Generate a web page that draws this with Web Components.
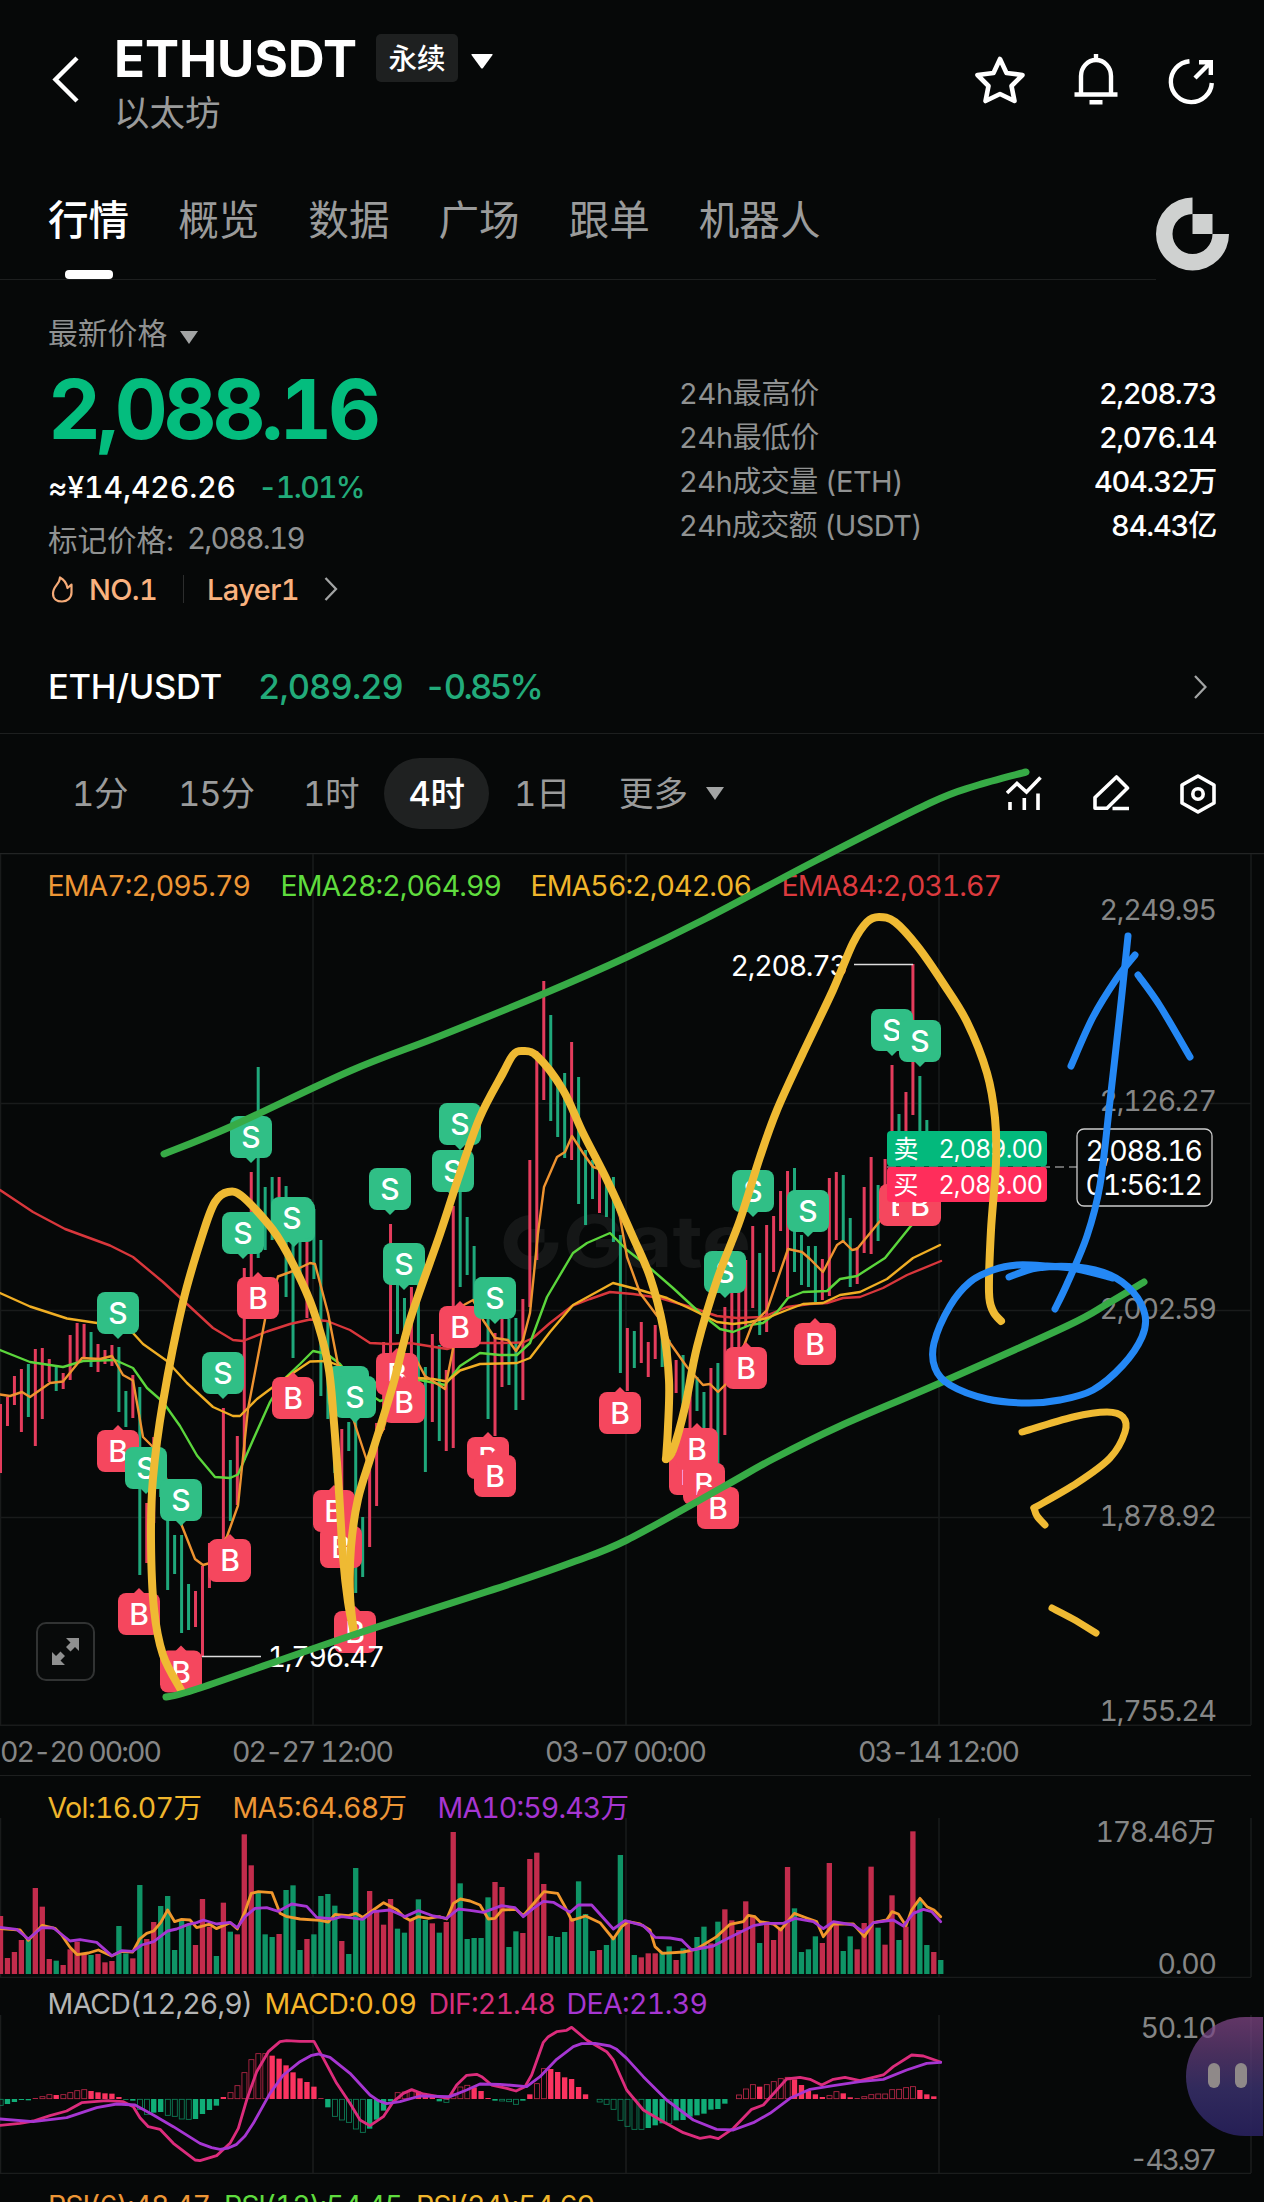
<!DOCTYPE html>
<html lang="zh-CN">
<head>
<meta charset="utf-8">
<title>ETHUSDT</title>
<style>
  html, body { margin: 0; background: #060808; }
  body {
    position: relative;
    width: 1264px;
    height: 2202px;
    overflow: hidden;
    font-family: Inter, "Noto Sans CJK SC", sans-serif;
    font-feature-settings: "tnum";
    color: #fff;
  }
</style>
</head>
<body>
<app-header symbol="ETHUSDT" name="以太坊">永续</app-header>
<tab-bar>
  <tab-item active>行情</tab-item>
  <tab-item>概览</tab-item>
  <tab-item>数据</tab-item>
  <tab-item>广场</tab-item>
  <tab-item>跟单</tab-item>
  <tab-item>机器人</tab-item>
</tab-bar>
<price-summary>
  <stat-row label="24h最高价" lw="140" value="2,208.73" vw="117"></stat-row>
  <stat-row label="24h最低价" lw="140" value="2,076.14" vw="117"></stat-row>
  <stat-row label="24h成交量 (ETH)" lw="224" value="404.32万" vw="122"></stat-row>
  <stat-row label="24h成交额 (USDT)" lw="243" value="84.43亿" vw="105"></stat-row>
</price-summary>
<pair-bar></pair-bar>
<interval-bar></interval-bar>
<kline-chart></kline-chart>
<volume-chart></volume-chart>
<macd-chart></macd-chart>
<rsi-legend></rsi-legend>
<drawing-layer></drawing-layer>
<assist-bubble></assist-bubble>

<script>
// Text that is tracked in or out until it takes the width in "w"
class FitText extends HTMLElement {
  constructor() {
    super();
    this.attachShadow({ mode: "open" });
    this.shadowRoot.innerHTML = `
      <style>
        :host { display: inline-block; white-space: nowrap; }
      </style>
      <span><slot></slot></span>`;
  }

  connectedCallback() {
    const w = parseFloat(this.getAttribute("w"));
    const n = this.textContent.length;
    if (!w || !n) return;
    const now = this.shadowRoot.querySelector("span").getBoundingClientRect().width;
    this.style.letterSpacing = (w - now) / n + "px";
  }
}
customElements.define("fit-text", FitText);

class AppHeader extends HTMLElement {
  constructor() {
    super();
    this.attachShadow({ mode: "open" });
  }

  connectedCallback() {
    this.shadowRoot.innerHTML = `
      <style>
        :host { display: flex; height: 170px; box-sizing: border-box; padding: 31px 48px 0 48px; }
        .back { margin: 22px 32px 0 0; }
        .names { flex: 1; }
        .line { display: flex; align-items: center; height: 54px; }
        .symbol { font-size: 51px; font-weight: 650; line-height: 54px; padding-top: 2px; }
        .badge { margin-left: 19px; width: 82px; height: 48px; line-height: 49px; border-radius: 5px;
          background: #1e2020; font-size: 28.5px; font-weight: 500; text-align: center; }
        .caret { margin: 6px 0 0 13px; }
        .name { line-height: 58px; font-size: 35.500px; color: #9a9b9b; }
        .icons { display: flex; gap: 47px; margin-top: 21px; }
      </style>
      <svg class="back" width="34" height="54" viewBox="48 53 34 54" fill="none" stroke="#fff" stroke-width="4.4"><path d="M77 58 55.500 79.5 77 101"/></svg>
      <div class="names">
        <div class="line">
          <fit-text class="symbol" w="243">${this.getAttribute("symbol")}</fit-text>
          <span class="badge"><slot></slot></span>
          <svg class="caret" width="22" height="15"><path d="M1 0H21Q22 0 21.500 1L12 14Q11 15 10 14L.5 1Q0 0 1 0Z" fill="#fff"/></svg>
        </div>
        <div class="name">${this.getAttribute("name")}</div>
      </div>
      <div class="icons">
        <svg width="52" height="54" viewBox="974 52 52 54" fill="none" stroke="#fff" stroke-width="4.600" stroke-linejoin="round"><path d="M1000 59 1006.500 73 1022.500 75 1011.500 86 1014.500 101 1000 94 985.500 101 988.500 86 977.500 75 993.500 73Z"/></svg>
        <svg width="46" height="54" viewBox="1073 52 46 54" fill="none" stroke="#fff" stroke-width="4.400"><path d="M1081 94V76a15 16 0 0 1 30 0V94M1074.500 94.500H1117.500M1096 54V61M1089.500 102.300H1102.500"/></svg>
        <svg width="50" height="54" viewBox="1166 52 50 54" fill="none" stroke="#fff" stroke-width="4.400"><path d="M1189.500 61.200A20.500 20.500 0 1 0 1211.800 83M1195 78 1210 63M1199 62.300H1210.800V75"/></svg>
      </div>`;
  }
}
customElements.define("app-header", AppHeader);

class TabItem extends HTMLElement {
  constructor() {
    super();
    this.attachShadow({ mode: "open" });
    this.shadowRoot.innerHTML = `
      <style>
        :host { display: flex; flex-direction: column; align-items: center; font-size: 40.600px; line-height: 98px; padding-top: 2px; color: #9a9b9b; }
        :host([active]) { color: #fff; font-weight: 500; }
        i { width: 48px; height: 9px; border-radius: 4px; }
        :host([active]) i { background: #fff; }
      </style>
      <span><slot></slot></span><i></i>`;
  }
}
customElements.define("tab-item", TabItem);

class TabBar extends HTMLElement {
  constructor() {
    super();
    this.attachShadow({ mode: "open" });
    this.shadowRoot.innerHTML = `
      <style>
        :host { display: flex; height: 110px; }
        nav { display: flex; gap: 49px; box-sizing: border-box; width: 1156px; padding-left: 48px; border-bottom: 1px solid #1d1f1f; }
        svg { margin-top: 27px; }
      </style>
      <nav><slot></slot></nav>
      <svg width="74" height="74" viewBox="0 0 74 74" fill="#cfd1d0">
        <path d="M36.500 .5A36.500 36.500 0 1 0 73 37H56.500A20 20 0 1 1 36.500 17ZM36.500 17H56.500V37H36.500Z"/>
      </svg>`;
  }
}
customElements.define("tab-bar", TabBar);

class StatRow extends HTMLElement {
  constructor() {
    super();
    this.attachShadow({ mode: "open" });
  }

  connectedCallback() {
    const a = (n) => this.getAttribute(n);
    this.shadowRoot.innerHTML = `
      <style>
        :host { display: flex; justify-content: space-between; font-size: 29px; line-height: 44px; }
        .label { color: #909292; }
        .value { font-weight: 500; }
      </style>
      <fit-text class="label" w="${a("lw")}">${a("label")}</fit-text>
      <fit-text class="value" w="${a("vw")}">${a("value")}</fit-text>`;
  }
}
customElements.define("stat-row", StatRow);

class PriceSummary extends HTMLElement {
  constructor() {
    super();
    this.attachShadow({ mode: "open" });
    this.shadowRoot.innerHTML = `
      <style>
        :host { display: flex; justify-content: space-between; height: 360px; box-sizing: border-box; padding: 31px 48px 0 48px; }
        .row { display: flex; align-items: center; white-space: nowrap; }
        .type { height: 40px; font-size: 29.800px; color: #909292; gap: 13px; }
        .type svg { margin-top: 12px; }
        .last { height: 117px; font-size: 82px; font-weight: 650; color: #04bd7e; }
        .fiat { height: 38px; font-size: 30px; font-weight: 500; gap: 22px; }
        .fiat .chg { color: #22ab7a; }
        .mark { height: 64px; font-size: 29.500px; color: #909292; gap: 13px; }
        .tags { height: 38px; font-size: 29px; font-weight: 500; color: #f9b27f; }
        .tags i { width: 1px; height: 28px; background: #2c2d2d; margin: 0 23px 0 26px; }
        .stats { width: 537px; padding-top: 61px; }
      </style>
      <div>
        <div class="row type">最新价格<svg width="18" height="13"><path d="M0 0H18L9 13Z" fill="#a2a4a4"/></svg></div>
        <div class="row last"><fit-text w="329">2,088.16</fit-text></div>
        <div class="row fiat"><fit-text w="188">≈¥14,426.26</fit-text><fit-text class="chg" w="106">-1.01%</fit-text></div>
        <div class="row mark"><span>标记价格:</span><fit-text w="117">2,088.19</fit-text></div>
        <div class="row tags">
          <svg width="41" height="28" viewBox="49 575 41 28" fill="none" stroke="#f5ab78" stroke-width="2.200" stroke-linejoin="round"><path d="M61 577.500C61 584 54 586 54 593.500C54 599 58 601.500 63 601.500S72.500 598 72.500 592.500V584.500L68.500 588C67.500 583 65 579.500 61 577.500Z"/></svg>
          <fit-text w="68">NO.1</fit-text><i></i><fit-text w="92">Layer1</fit-text>
          <svg width="40" height="26" viewBox="299 576 40 26" fill="none" stroke="#a2a4a4" stroke-width="2.300"><path d="M325.500 578 336 589 325.500 600"/></svg>
        </div>
      </div>
      <div class="stats"><slot></slot></div>`;
  }
}
customElements.define("price-summary", PriceSummary);

class PairBar extends HTMLElement {
  constructor() {
    super();
    this.attachShadow({ mode: "open" });
    this.shadowRoot.innerHTML = `
      <style>
        :host { display: flex; align-items: center; height: 94px; box-sizing: border-box; padding: 0 57px 0 48px;
          font-size: 34.500px; font-weight: 500; border-bottom: 1px solid #1d1f1f; }
        .price { margin-left: 36px; color: #22ab7a; }
        .chg { margin-left: 21px; color: #22ab7a; }
        svg { margin-left: auto; }
      </style>
      <fit-text w="174">ETH/USDT</fit-text>
      <fit-text class="price" w="145">2,089.29</fit-text>
      <fit-text class="chg" w="117">-0.85%</fit-text>
      <svg width="14" height="24" fill="none" stroke="#a2a4a4" stroke-width="2.300"><path d="M2 1 12.500 12 2 23"/></svg>`;
  }
}
customElements.define("pair-bar", PairBar);

class IntervalBar extends HTMLElement {
  constructor() {
    super();
    this.attachShadow({ mode: "open" });
    this.shadowRoot.innerHTML = `
      <style>
        :host { display: flex; align-items: center; height: 119px; padding: 0 47px 0 72px;
          font-size: 34.500px; line-height: 70px; color: #9a9b9b; }
        .on { box-sizing: border-box; width: 105px; height: 71px; margin: 0 25px 0 25px; border-radius: 36px;
          background: #1f2121; color: #fff; font-weight: 500; text-align: center; }
        .caret { margin: 0 auto 0 18px; }
        .tool + .tool { margin-left: 49px; }
        fit-text { padding-top: 1px; }
      </style>
      <fit-text w="56">1分</fit-text>
      <fit-text w="76" style="margin-left:50px">15分</fit-text>
      <fit-text w="56" style="margin-left:49px">1时</fit-text>
      <span class="on"><fit-text w="56">4时</fit-text></span>
      <fit-text w="56">1日</fit-text>
      <fit-text w="69" style="margin-left:49px">更多</fit-text>
      <svg class="caret" width="18" height="13"><path d="M0 0H18L9 13Z" fill="#a2a4a4"/></svg>
      <svg class="tool" width="37" height="42" viewBox="1006 773 37 42" fill="none" stroke="#fff" stroke-width="3.600"><path d="M1007 793 1017 783.500 1026.500 792 1040.500 777.500M1010 802V810M1024.300 798V810M1038 793.500V810"/></svg>
      <svg class="tool" width="38" height="42" viewBox="1092 773 38 42" fill="none" stroke="#fff" stroke-width="3.600" stroke-linejoin="round"><path d="M1116.500 777 1127.500 788 1107 808.300H1095V797.500ZM1112.500 808.500H1129"/></svg>
      <svg class="tool" width="38" height="42" viewBox="1179 773 38 42" fill="none" stroke="#fff" stroke-width="3.600" stroke-linejoin="round"><path d="M1198 776 1214 785V803L1198 812 1182 803V785Z"/><circle cx="1198" cy="794" r="5.200"/></svg>`;
  }
}
customElements.define("interval-bar", IntervalBar);

const UP = "#e43c5c";
const DOWN = "#1fa87b";
const GRID_X = [0.5, 313, 626, 939, 1251];
const barX = (i) => 0.5 + 6.965 * i;

// [x, baseline, width, text, colour]
function label([x, y, w, text, fill = "#858686", size = 28.5]) {
  return `<text x="${x - 1.5}" y="${y}" textLength="${w + 2.5}" font-size="${size}" fill="${fill}">${text}</text>`;
}

function line(points, stroke, width) {
  return `<polyline points="${points}" fill="none" stroke="${stroke}" stroke-width="${width}" stroke-linejoin="round" stroke-linecap="round"/>`;
}

// r = rising, g = falling; high and low of each bar from left to right
const CANDLES = `r1404-1473 r1397-1426 r1376-1405 r1369-1432 g1364-1417 r1349-1446 r1348-1419 r1359-1382 g1367-1391 r1373-1389
r1335-1380 r1323-1363 r1324-1359 g1332-1367 r1344-1372 r1350-1364 r1345-1366 g1347-1412 g1391-1427 r1375-1418
g1387-1575 r1503-1563 r1437-1523 g1450-1497 g1519-1590 g1535-1574 g1535-1633 g1584-1630 r1591-1627 r1566-1657
r1543-1588 r1540-1560 r1408-1540 g1460-1521 r1436-1505 r1268-1460 r1172-1278 g1067-1258 g1187-1250 g1177-1240
r1177-1230 g1186-1297 g1240-1358 g1230-1278 r1232-1318 g1209-1279 g1240-1396 g1320-1419 g1370-1473 r1429-1500
g1422-1451 g1420-1593 g1517-1577 r1454-1547 r1423-1506 r1342-1430 r1224-1354 g1285-1334 g1298-1350 r1287-1360
g1270-1400 g1367-1472 r1334-1422 g1345-1441 r1370-1451 r1206-1448 g1190-1287 g1217-1275 g1246-1300 g1277-1315
g1318-1419 r1333-1436 r1318-1387 g1319-1385 g1318-1410 r1299-1400 r1160-1307 r1051-1260 r981-1100 g1015-1121
g1083-1137 g1073-1158 r1042-1160 g1077-1204 g1150-1225 g1160-1199 r1165-1213 g1185-1217 g1177-1242 g1235-1373
r1328-1391 g1331-1368 r1322-1363 r1342-1377 r1325-1359 g1318-1367 g1340-1413 r1360-1393 g1355-1410 r1377-1430
g1377-1411 g1392-1430 r1368-1430 g1363-1465 r1307-1435 r1292-1350 r1292-1350 r1260-1327 r1226-1308 g1253-1335
r1225-1332 r1216-1272 r1191-1231 r1171-1297 g1168-1272 g1235-1285 g1246-1287 g1246-1302 r1259-1300 r1178-1296
r1172-1240 g1175-1243 g1218-1287 r1247-1284 r1187-1253 r1157-1254 g1185-1241 r1159-1200 r1065-1135 g1114-1140
r1092-1140 r964-1115 g1076-1140 g1120-1140`.split(/\s+/);

const EMA = [
  ["#d9373c", `0,1190 33,1212 65,1229 110,1245.500 133,1257 163,1282 187,1304 213,1328 233,1340 243,1341 267,1331.500 290,1324 310,1319.500 327,1321 350,1330 370,1343 390,1344 410,1343 447,1349 467,1343 500,1343 523,1342.500 533,1338 550,1323 572,1306 590,1299 610,1292 633,1294 660,1298 687,1306 717,1316 737,1318 763,1317 787,1307 810,1304 827,1303 843,1298 860,1297 883,1288 907,1275 941,1261`],
  ["#5bd63c", `0,1350 30,1362 63,1367 83,1361 115,1360 133,1368 147,1388 163,1402 180,1426 197,1455.500 215,1477 230,1478 238,1474.500 253,1440 270,1402 283,1380 300,1364 313,1351 327,1354 340,1364 360,1388 380,1401 400,1395 420,1380 445,1385 460,1366 480,1353 500,1355 517,1355 530,1343 547,1297 573,1253 587,1243 610,1233 627,1250 650,1268 673,1288 700,1313 720,1329 733,1332 750,1325 763,1323 777,1312 788,1298 803,1292 827,1291 840,1279 857,1276 885,1258 910,1227 920,1217`],
  ["#f0ae24", `0,1293 30,1306.500 67,1318.500 97,1323 133,1333 143,1344 167,1361 187,1383 213,1407 233,1416 240,1416 257,1399 273,1387 293,1373 310,1361.500 327,1361 340,1366 353,1378 385,1385 418,1378 433,1379 447,1381.500 460,1370.500 480,1364 500,1363.500 517,1363 530,1358 550,1332 573,1305 613,1283 640,1290 667,1298 693,1310 717,1322 733,1324 750,1322 767,1318 787,1310 803,1304 823,1303 840,1295 860,1292 887,1279 913,1258 940,1245`],
  ["#ee9330", `0,1394.500 10,1396 22,1392 30,1397 50,1383 63,1381.500 82,1358 100,1359 112,1356 123,1375 133,1380.500 143,1437 152,1446 165,1475 182,1526 195,1559 203,1565 210,1563 227,1536.500 238,1505.500 248,1409 265,1319.500 278,1276.500 293,1271 310,1263 315,1264 328,1313 340,1375 355,1424.500 367,1461 383,1430 400,1375 417,1361 425,1376 445,1389 453,1349 462,1306 473,1300 483,1320 495,1338 508,1340 516,1351 523,1340 530,1313 538,1233 544,1187 557,1157 565,1152 572,1136 583,1153 593,1167 603,1170 620,1217 627,1257 640,1293 658,1317 670,1343 687,1367 703,1385 710,1384 718,1392 730,1380 745,1343 752,1325 767,1310 788,1249 802,1252 810,1259 823,1272 837,1245 843,1241 852,1250 857,1249 880,1221`],
];

// side, centre x, top of the box
const TRADES = [
  ["S", 251, 1116], ["S", 453, 1150], ["S", 460, 1103], ["S", 390, 1168], ["S", 294, 1200], ["S", 292, 1197],
  ["S", 243, 1212], ["B", 258, 1277], ["S", 118, 1292], ["S", 223, 1352], ["B", 118, 1430], ["S", 146, 1447],
  ["S", 181, 1479], ["B", 139, 1593], ["B", 181, 1650.5], ["B", 229, 1540], ["B", 230, 1539], ["B", 293, 1377],
  ["S", 348, 1366], ["S", 355, 1376], ["B", 397, 1353], ["B", 404, 1381], ["S", 404, 1243], ["B", 460, 1306],
  ["S", 495, 1277], ["B", 334, 1490], ["B", 341, 1526], ["B", 355, 1611], ["B", 488, 1437], ["B", 495, 1455],
  ["B", 620, 1392], ["B", 690, 1453], ["B", 704, 1463], ["B", 697, 1428], ["B", 718, 1487], ["B", 746, 1347],
  ["B", 815, 1323], ["S", 725, 1251], ["S", 753, 1170], ["S", 808, 1190], ["S", 892, 1009], ["S", 920, 1020],
  ["B", 900, 1184], ["B", 920, 1184],
];

function trade([side, x, y]) {
  const sell = side === "S";
  const tip = sell ? `M${x - 6} ${y + 41}h12l-6 6z` : `M${x - 6} ${y + 1}h12l-6 -6z`;
  return `<g fill="${sell ? "#30bf86" : "#f5475e"}"><rect x="${x - 21}" y="${y}" width="42" height="42" rx="8"/><path d="${tip}"/>
    <text x="${x}" y="${y + 32}" font-size="30" font-weight="500" text-anchor="middle" fill="#fff">${side}</text></g>`;
}

class KlineChart extends HTMLElement {
  constructor() {
    super();
    this.attachShadow({ mode: "open" });
    const candles = CANDLES.map((c, i) => {
      const [hi, lo] = c.slice(1).split("-").map(Number);
      return `<rect x="${barX(i) - 1.5}" y="${hi}" width="3" height="${lo - hi}" fill="${c[0] === "r" ? UP : DOWN}"/>`;
    }).join("");
    this.shadowRoot.innerHTML = `
      <style>
        :host { display: block; }
        svg { display: block; }
        .dates { display: grid; grid-template-columns: 232px 313px 313px auto; box-sizing: border-box; width: 1251px; height: 50px;
          border-bottom: 1px solid #1d1f1f; font-size: 28.500px; line-height: 52px; color: #858686; }
      </style>
      <svg width="1264" height="873" viewBox="0 853 1264 873">
        <g stroke="#191b1b" stroke-width="1.500">
          <path d="M0 853.500H1264" stroke="#222424"/>
          <path d="M0 1103.500H1251M0 1310.500H1251M0 1517.500H1251M0 1725.300H1251"/>
          ${GRID_X.map((x) => `<path d="M${x} 854V1725"/>`).join("")}
        </g>
        <g fill="#151717">
          <path d="M531 1215a27.500 27.500 0 1 0 27.500 27.500h-14a13.500 13.500 0 1 1 -13.500 -13.500zM531 1229h13.500v13.500h-13.500z"/>
          <text x="563" y="1267" font-size="72" font-weight="700" textLength="188" lengthAdjust="spacingAndGlyphs">Gate</text>
        </g>
        ${candles}
        ${EMA.map(([c, p]) => line(p, c, 2.4)).join("")}
        ${TRADES.map(trade).join("")}
        ${label([49, 896, 201, "EMA7:2,095.79", "#ed9636"])}
        ${label([282, 896, 219, "EMA28:2,064.99", "#5fdc3e"])}
        ${label([532, 896, 219, "EMA56:2,042.06", "#f0b62c"])}
        ${label([783, 896, 218, "EMA84:2,031.67", "#db3a3e"])}
        ${label([1101, 920, 115, "2,249.95"])}
        ${label([1101, 1111, 115, "2,126.27"])}
        ${label([1101, 1319, 115, "2,002.59"])}
        ${label([1101, 1526, 115, "1,878.92"])}
        ${label([1101, 1721, 115, "1,755.24"])}
        ${label([732, 976, 115, "2,208.73", "#fff"])}
        ${label([269, 1667, 115, "1,796.47", "#fff"])}
        <path d="M854 964.500H913M202 1656.500H261" stroke="#ddd" stroke-width="1.300"/>
        <path d="M887 1167H1077" stroke="#8a8a8a" stroke-width="1.500" stroke-dasharray="9 5"/>
        <rect x="887" y="1131" width="160" height="35.500" rx="4" fill="#03b97c"/>
        <rect x="887" y="1167" width="160" height="35" rx="4" fill="#ff2d5b"/>
        ${label([895, 1158, 25, "卖", "#fff", 25])}
        ${label([940, 1158, 102, "2,089.00", "#fff", 25])}
        ${label([895, 1194, 25, "买", "#fff", 25])}
        ${label([940, 1194, 102, "2,088.00", "#fff", 25])}
        <rect x="1077" y="1129" width="135" height="77" rx="7" fill="#060808" stroke="#ccc" stroke-width="1.300"/>
        ${label([1087, 1161, 115, "2,088.16", "#fff"])}
        ${label([1087, 1195, 115, "01:56:12", "#fff"])}
        <rect x="37" y="1623" width="57" height="57" rx="9" fill="#080a0a" stroke="#313333" stroke-width="2"/>
        <path d="M66 1638H79V1651L75 1647 70.500 1651.500 66 1647 70.500 1642.500ZM65 1665H52V1652L56 1656 60.500 1651.500 65 1656 60.500 1660.500Z" fill="#8f9090"/>
      </svg>
      <div class="dates">
        <fit-text w="160">02-20 00:00</fit-text>
        <fit-text w="160">02-27 12:00</fit-text>
        <fit-text w="160">03-07 00:00</fit-text>
        <fit-text w="160">03-14 12:00</fit-text>
      </div>`;
  }
}
customElements.define("kline-chart", KlineChart);

// Bars and curves of both lower panels are in thirds of a pixel
const VOLUME = `r528 r654 r636 r600 g600 r444 r500 r657 g662 r675 r628 r605 r640 g645 r642 r667 r663 g558 g640 r655
g435 r597 r546 g498 g468 g630 g540 g555 r615 r477 r560 g648 r488 g575 r583 r283 r376 g455 g583 g591
r582 g450 g436 g630 r597 g583 g468 g462 g497 r603 g642 g384 g535 r453 r510 r554 r477 g566 g578 r540
g478 g540 r550 g578 r546 r276 g430 g597 g594 g594 g472 r426 r441 g621 g574 r579 r357 r338 r432 g588
g591 g576 r535 g424 g522 g633 r630 g615 g590 g345 r545 g645 r652 r640 r640 g635 g619 r660 g625 r635
g591 g560 r610 g545 r508 r541 r570 r484 r527 g609 r545 r600 r562 r381 g505 g636 g628 g589 r609 r369
r552 g633 g589 r628 r549 r380 g563 r614 r466 g600 r560 r274 g483 g615 r636 g660`.split(/\s+/);

const VOLUME_MA5 = `0,566 60,570 85,601 127,556 165,565 185,585 210,622 232,644 265,639 295,630 335,648 365,634 398,636 419,597 440,580 461,573 482,548 503,510 524,545 545,538 570,540 590,563 610,558 628,552 649,566 691,548 712,567 735,515 754,460 775,455 816,458 840,520 858,529 900,537 960,541 985,546 1005,523 1046,527 1067,520 1088,532 1120,510 1151,488 1192,510 1213,532 1230,541 1255,530 1285,535 1318,530 1340,537 1360,490 1381,477 1410,483 1440,495 1465,537 1485,535 1506,510 1548,508 1570,527 1610,480 1632,455 1673,460 1695,500 1715,541 1757,528 1800,548 1840,597 1865,560 1885,545 1920,552 1950,570 1965,620 1987,640 2050,636 2090,627 2150,590 2190,553 2230,545 2245,526 2265,530 2280,545 2320,552 2342,570 2383,520 2420,534 2450,545 2470,590 2500,552 2560,552 2593,590 2620,548 2660,540 2676,515 2695,522 2718,557 2735,510 2760,475 2781,500 2802,510 2822,530`;
const VOLUME_MA10 = `0,562 50,568 85,597 125,563 160,564 210,603 240,599 290,607 335,647 365,632 398,634 425,615 461,605 503,573 530,567 565,553 590,548 610,540 650,552 690,547 712,563 735,530 765,505 800,503 835,514 875,492 920,499 950,532 1000,537 1025,530 1088,538 1120,515 1170,510 1215,530 1255,512 1300,528 1340,535 1375,507 1410,511 1450,517 1505,497 1545,503 1570,530 1600,505 1630,484 1660,487 1710,517 1735,495 1775,495 1840,567 1875,542 1930,557 1965,592 2010,594 2045,600 2075,630 2140,618 2180,597 2260,557 2300,550 2350,550 2385,535 2440,545 2470,566 2500,545 2560,555 2590,576 2620,548 2680,540 2710,558 2740,520 2770,508 2795,515 2822,545`;

class VolumeChart extends HTMLElement {
  constructor() {
    super();
    this.attachShadow({ mode: "open" });
    const bars = VOLUME.map((v, i) => {
      const top = Number(v.slice(1));
      return `<rect x="${barX(i) * 3 - 8}" y="${top}" width="16" height="${702 - top}" fill="${v[0] === "r" ? "#c22c4c" : "#0f9466"}"/>`;
    }).join("");
    this.shadowRoot.innerHTML = `
      <style>
        :host { display: block; }
        svg { display: block; }
      </style>
      <svg width="1264" height="202" viewBox="0 1776 1264 202">
        <path d="M0 1977.500H1251${GRID_X.map((x) => `M${x} 1818V1977`).join("")}" stroke="#191b1b" stroke-width="1.500"/>
        <g transform="translate(0 1740) scale(.33333)">
          ${bars}
          ${line(VOLUME_MA5, "#f0972c", 8.5)}
          ${line(VOLUME_MA10, "#a636d2", 8.5)}
        </g>
        ${label([49, 1818, 152, "Vol:16.07万", "#f0b62c"])}
        ${label([234, 1818, 172, "MA5:64.68万", "#ed9636"])}
        ${label([439, 1818, 189, "MA10:59.43万", "#a636d2"])}
        ${label([1097, 1842, 118, "178.46万"])}
        ${label([1159, 1974, 57, "0.00"])}
      </svg>`;
  }
}
customElements.define("volume-chart", VolumeChart);

// far end of each bar; "o" marks an outlined bar
const MACD = `1097o 1092 1086 1080 1081 1075 1069o 1063o 1065 1063o 1057o 1051o 1048o 1053 1057 1060 1061 1071 1079 1082
1109o 1124o 1118 1116 1127o 1130o 1138o 1139o 1137 1122 1110 1097 1071 1057o 1036o 997o 958o 940o 940o 947
956 976 997 1015 1026 1040 1075 1102 1130o 1141o 1148o 1168o 1178o 1166 1139 1112 1084 1057o 1055o 1052o
1055 1065 1071 1084 1088o 1060o 1040o 1035o 1042 1053 1074 1082 1084o 1086o 1094o 1082 1063 1030o 985o 987
996 1012 1017 1041 1063 1077 1087o 1094o 1109o 1142o 1160o 1169o 1169o 1164 1156 1150 1151o 1141 1140 1130
1126 1121 1109 1107 1091 1077 1064o 1046o 1033o 1040 1033o 1024o 1015o 1011o 1018 1035 1052 1063 1071 1066o
1054o 1060 1072 1075 1069o 1063o 1061o 1061o 1048o 1047o 1042o 1039o 1050 1063 1069 1077`.split(/\s+/);

const DIF = `0,1156 60,1150 100,1143 150,1127 200,1113 245,1088 320,1082 370,1085 400,1100 420,1133 445,1160 480,1168 520,1210 585,1260 600,1262 650,1247 690,1210 715,1165 740,1080 770,995 805,935 840,905 860,902 900,904 942,904 970,955 1010,1030 1050,1090 1080,1140 1110,1157 1150,1130 1180,1085 1210,1060 1235,1049 1270,1062 1345,1075 1370,1035 1400,1006 1430,1003 1445,1010 1475,1035 1520,1045 1548,1053 1575,1040 1595,1005 1630,907 1645,890 1670,875 1700,871 1715,862 1760,900 1820,935 1840,960 1880,1050 1930,1110 1990,1145 2050,1178 2100,1195 2130,1190 2155,1196 2200,1165 2255,1108 2290,1095 2360,1017 2400,1012 2430,1018 2465,1035 2500,1018 2535,1012 2580,1022 2650,1005 2680,980 2735,945 2770,948 2822,966`;
const DEA = `0,1137 100,1145 200,1133 290,1103 350,1092 405,1095 460,1125 520,1160 600,1210 635,1223 660,1228 685,1224 710,1213 735,1188 760,1150 810,1060 850,1005 900,965 935,946 955,942 990,952 1050,1000 1110,1065 1135,1082 1160,1091 1200,1085 1260,1068 1350,1070 1400,1050 1440,1032 1500,1033 1580,1040 1620,1010 1670,958 1720,920 1745,911 1785,910 1830,918 1850,928 1880,955 1930,1010 2000,1080 2080,1140 2150,1168 2200,1170 2260,1148 2310,1120 2370,1075 2430,1048 2500,1037 2580,1025 2650,1018 2720,990 2780,970 2822,967`;

class MacdChart extends HTMLElement {
  constructor() {
    super();
    this.attachShadow({ mode: "open" });
    const bars = MACD.map((m, i) => {
      const end = parseInt(m);
      const c = end < 1077 ? "#fb3360" : "#10ad77";
      const y = Math.min(end, 1077);
      const h = Math.abs(end - 1077);
      const x = barX(i) * 3;
      return m.endsWith("o")
        ? `<rect x="${x - 7}" y="${y + 1}" width="15" height="${Math.max(h - 2, 1)}" fill="none" stroke="${c}" stroke-width="2.500" opacity=".75"/>`
        : `<rect x="${x - 8}" y="${y}" width="16" height="${h}" fill="${c}"/>`;
    }).join("");
    this.shadowRoot.innerHTML = `
      <style>
        :host { display: block; }
        svg { display: block; }
      </style>
      <svg width="1264" height="196" viewBox="0 1978 1264 196">
        <path d="M0 2173.500H1251${GRID_X.map((x) => `M${x} 2015V2173`).join("")}" stroke="#1b1d1d" stroke-width="1.500"/>
        <g transform="translate(0 1740) scale(.33333)">
          ${bars}
          ${line(DIF, "#dc2c7c", 8.5)}
          ${line(DEA, "#a636d2", 8.5)}
        </g>
        ${label([49, 2014, 203, "MACD(12,26,9)", "#b4b5b5"])}
        ${label([266, 2014, 150, "MACD:0.09", "#f5b52a"])}
        ${label([430, 2014, 125, "DIF:21.48", "#d52f7d"])}
        ${label([568, 2014, 139, "DEA:21.39", "#a636d2"])}
        ${label([1142, 2038, 74, "50.10"])}
        ${label([1131, 2170, 85, "-43.97"])}
      </svg>`;
  }
}
customElements.define("macd-chart", MacdChart);

class RsiLegend extends HTMLElement {
  constructor() {
    super();
    this.attachShadow({ mode: "open" });
    this.shadowRoot.innerHTML = `
      <style>
        :host { display: flex; gap: 14px; height: 28px; overflow: hidden; padding-left: 48px; font-size: 28.500px; line-height: 64px; }
      </style>
      <fit-text w="162" style="color:#ed9636">RSI(6):48.47</fit-text>
      <fit-text w="178" style="color:#5fdc3e">RSI(12):54.45</fit-text>
      <fit-text w="178" style="color:#f0b62c">RSI(24):54.69</fit-text>`;
  }
}
customElements.define("rsi-legend", RsiLegend);

// Smooth path through hand-drawn points (Catmull-Rom)
function stroke(points) {
  const p = points.split(" ").map((s) => s.split(",").map(Number));
  let d = `M${p[0]}`;
  for (let i = 0; i < p.length - 1; i++) {
    const a = p[i - 1] || p[i], b = p[i], c = p[i + 1], e = p[i + 2] || c;
    d += `C${b[0] + (c[0] - a[0]) / 6} ${b[1] + (c[1] - a[1]) / 6} ${c[0] - (e[0] - b[0]) / 6} ${c[1] - (e[1] - b[1]) / 6} ${c}`;
  }
  return `<path d="${d}"/>`;
}

class DrawingLayer extends HTMLElement {
  constructor() {
    super();
    this.attachShadow({ mode: "open" });
    this.shadowRoot.innerHTML = `
      <style>
        :host { position: absolute; inset: 0; pointer-events: none; }
      </style>
      <svg width="1264" height="2202" viewBox="0 0 1264 2202" fill="none" stroke-linecap="round" stroke-linejoin="round">
        <g stroke="#efba33" stroke-width="8">
          ${stroke("181,1690 163,1655 154,1609 151,1540 153,1478 163,1402 183,1302 204,1230 215,1202 228,1192 243,1197 273,1230 293,1264 313,1309 328,1364 334,1423 339,1492 343,1557 348,1602 354,1633")}
          ${stroke("354,1633 350,1595 351,1547 358,1499 373,1450 393,1385 410,1320 440,1234 460,1173 480,1117 503,1073 513,1055 522,1051 537,1056 563,1090 583,1133 607,1180 633,1237 650,1277 663,1327 669,1380 668,1427 666,1459")}
          ${stroke("666,1459 673,1450 685,1407 697,1347 717,1280 740,1220 760,1157 777,1110 803,1053 833,990 853,943 867,922 879,917 895,922 918,947 943,983 967,1022 987,1073 995,1118 996,1163 991,1230 989,1292 993,1311 1001,1321")}
        </g>
        <g stroke="#efba33" stroke-width="7">
          ${stroke("1022,1432 1073,1417 1107,1412 1123,1417 1125,1432 1110,1458 1077,1483 1034,1508")}
          ${stroke("1034,1508 1037,1516 1045,1525")}
          ${stroke("1052,1608 1073,1619 1096,1633")}
        </g>
        <g stroke="#37ab46" stroke-width="7">
          ${stroke("164,1154 230,1127 350,1071 440,1036 543,994 627,957 707,918 817,860 930,803 975,786 1026,772")}
          ${stroke("166,1697 200,1688 353,1635 510,1584 573,1562 627,1540 723,1487 773,1459 840,1426 940,1383 1067,1326 1107,1304 1144,1282")}
        </g>
        <g stroke="#2488f5" stroke-width="7">
          ${stroke("1009,1277 1037,1268 1077,1267 1110,1275 1133,1292 1145,1315 1142,1337 1123,1365 1093,1390 1060,1400 1027,1403 987,1399 950,1385 935,1368 934,1343 950,1306 970,1282 993,1270 1017,1265 1047,1266 1077,1269 1113,1278")}
          ${stroke("1055,1309 1067,1284 1087,1236 1100,1185 1110,1101 1120,1012 1128,936")}
          ${stroke("1071,1066 1093,1017 1117,978 1135,955")}
          ${stroke("1138,975 1160,1006 1190,1057")}
        </g>
      </svg>`;
  }
}
customElements.define("drawing-layer", DrawingLayer);

class AssistBubble extends HTMLElement {
  constructor() {
    super();
    this.attachShadow({ mode: "open" });
    this.shadowRoot.innerHTML = `
      <style>
        :host { position: absolute; top: 2017px; right: 1px; display: flex; align-items: center; gap: 15px;
          box-sizing: border-box; width: 77px; height: 119px; padding: 0 0 3px 22px;
          border-radius: 60px 0 0 60px; background: linear-gradient(#8a4a8fb0, #5f3c78c0 30%, #372f68e0 60%, #27205af0); }
        i { width: 12px; height: 25px; border-radius: 6px; background: #8f8989; }
      </style>
      <i></i><i></i>`;
  }
}
customElements.define("assist-bubble", AssistBubble);
</script>
</body>
</html>
